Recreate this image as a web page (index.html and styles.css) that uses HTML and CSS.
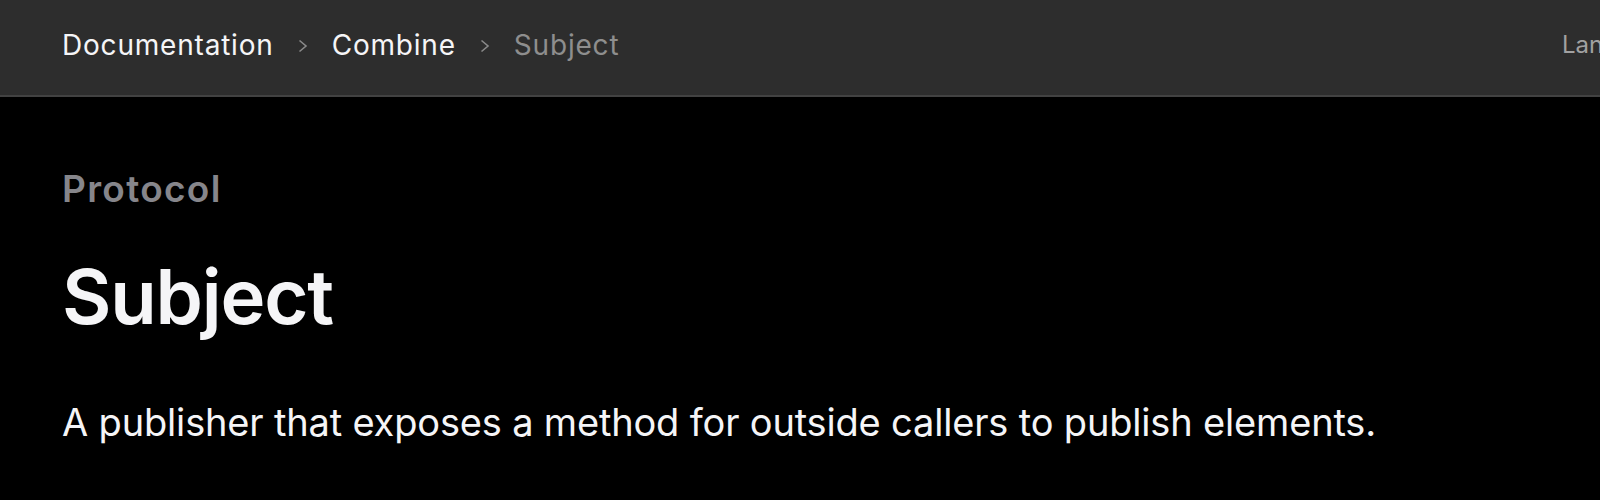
FILE: index.html
```html
<!DOCTYPE html>
<html lang="en">
<head>
  <meta charset="UTF-8" />
  <meta name="viewport" content="width=device-width, initial-scale=1.0"/>
  <title>Subject | Apple Developer Documentation</title>
  <link rel="stylesheet" href="styles.css">
</head>
<body>
  <nav class="topbar">
    <ol class="crumbs">
      <li><a href="#">Documentation</a></li>
      <li class="sep">
        <svg width="10" height="14" viewBox="0 0 10 14"><polyline points="1.5,1.5 8,7 1.5,12.5" fill="none" stroke="#8a8a8a" stroke-width="1.6"/></svg>
      </li>
      <li><a href="#">Combine</a></li>
      <li class="sep">
        <svg width="10" height="14" viewBox="0 0 10 14"><polyline points="1.5,1.5 8,7 1.5,12.5" fill="none" stroke="#8a8a8a" stroke-width="1.6"/></svg>
      </li>
      <li class="current">Subject</li>
    </ol>
    <div class="lang">Language: Swift</div>
  </nav>

  <main class="intro">
    <div class="eyebrow">Protocol</div>
    <h1>Subject</h1>
    <p class="abstract">A publisher that exposes a method for outside callers to publish elements.</p>
  </main>
</body>
</html>
```

FILE: styles.css
```css
html, body {
  overflow: hidden;
}
body {
  font-family: 'Inter', 'Noto Sans', sans-serif;
  background: #000;
  color: #f5f5f7;
  margin: 0;
  padding: 0;
}
.topbar {
  display: flex;
  align-items: center;
  height: 97px;
  padding: 0 0 6px 62px;
  box-sizing: border-box;
  background: #2d2d2d;
  border-bottom: 2px solid #424242;
}
.crumbs {
  display: flex;
  align-items: center;
  gap: 24px;
  list-style: none;
  margin: 0;
  padding: 0;
  font-size: 28px;
  line-height: 34px;
  letter-spacing: 0.8px;
}
.crumbs a {
  color: #f5f5f7;
  text-decoration: none;
}
.crumbs .sep {
  display: flex;
  padding-top: 2px;
}
.crumbs .current {
  color: #8e8e8e;
}
.lang {
  margin-left: auto;
  width: 38px;
  overflow: hidden;
  white-space: nowrap;
  font-size: 24px;
  line-height: 30px;
  color: #a1a1a1;
}
.intro {
  padding: 70px 62px 0;
}
.eyebrow {
  font-size: 37px;
  line-height: 44px;
  font-weight: 600;
  letter-spacing: 1.3px;
  color: #86868b;
}
h1 {
  margin: 43px 0 0;
  font-size: 76px;
  line-height: 84px;
  font-weight: 600;
  letter-spacing: -1.2px;
}
.abstract {
  margin: 60px 0 0;
  font-size: 38px;
  line-height: 48px;
  letter-spacing: -0.17px;
}
```
